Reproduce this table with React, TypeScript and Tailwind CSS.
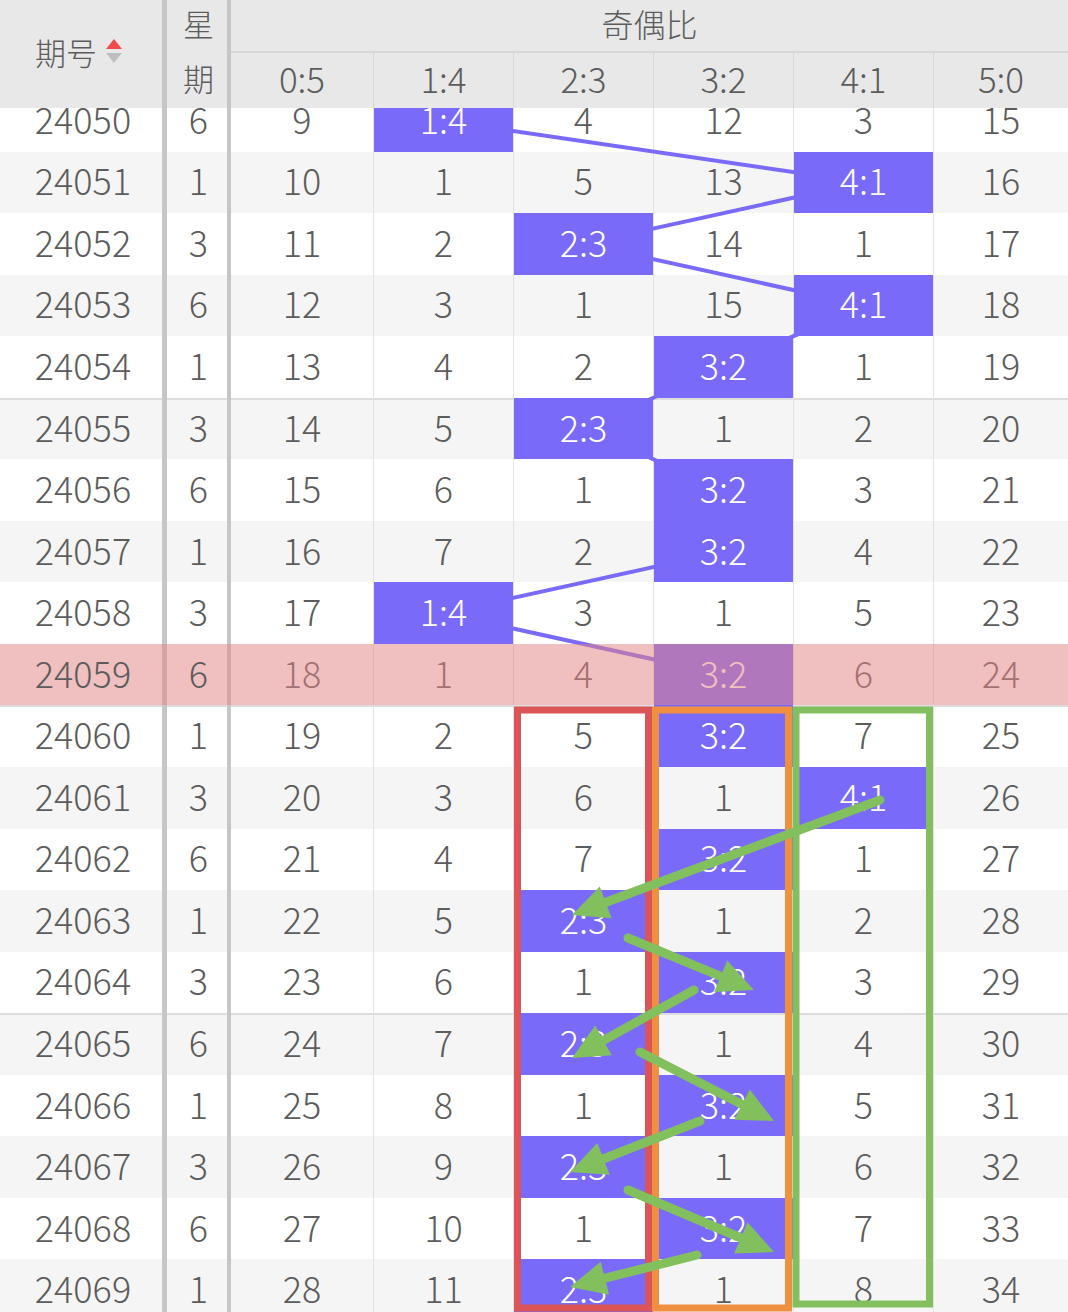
import React from "react";

const RATIOS = ["0:5", "1:4", "2:3", "3:2", "4:1", "5:0"];

// hit = column index of the drawn ratio for that issue
const ROWS = [
  { id: "24050", wk: 6, v: [9, 0, 4, 12, 3, 15], hit: 1 },
  { id: "24051", wk: 1, v: [10, 1, 5, 13, 0, 16], hit: 4 },
  { id: "24052", wk: 3, v: [11, 2, 0, 14, 1, 17], hit: 2 },
  { id: "24053", wk: 6, v: [12, 3, 1, 15, 0, 18], hit: 4 },
  { id: "24054", wk: 1, v: [13, 4, 2, 0, 1, 19], hit: 3 },
  { id: "24055", wk: 3, v: [14, 5, 0, 1, 2, 20], hit: 2 },
  { id: "24056", wk: 6, v: [15, 6, 1, 0, 3, 21], hit: 3 },
  { id: "24057", wk: 1, v: [16, 7, 2, 0, 4, 22], hit: 3 },
  { id: "24058", wk: 3, v: [17, 0, 3, 1, 5, 23], hit: 1 },
  { id: "24059", wk: 6, v: [18, 1, 4, 0, 6, 24], hit: 3 },
  { id: "24060", wk: 1, v: [19, 2, 5, 0, 7, 25], hit: 3 },
  { id: "24061", wk: 3, v: [20, 3, 6, 1, 0, 26], hit: 4 },
  { id: "24062", wk: 6, v: [21, 4, 7, 0, 1, 27], hit: 3 },
  { id: "24063", wk: 1, v: [22, 5, 0, 1, 2, 28], hit: 2 },
  { id: "24064", wk: 3, v: [23, 6, 1, 0, 3, 29], hit: 3 },
  { id: "24065", wk: 6, v: [24, 7, 0, 1, 4, 30], hit: 2 },
  { id: "24066", wk: 1, v: [25, 8, 1, 0, 5, 31], hit: 3 },
  { id: "24067", wk: 3, v: [26, 9, 0, 1, 6, 32], hit: 2 },
  { id: "24068", wk: 6, v: [27, 10, 1, 0, 7, 33], hit: 3 },
  { id: "24069", wk: 1, v: [28, 11, 0, 1, 8, 34], hit: 2 },
];

const COLS = [
  "w-[143px] border-r",
  "w-[140px] border-r",
  "w-[140px] border-r",
  "w-[140px] border-r",
  "w-[140px] border-r",
  "flex-1",
];
const CENTERS = [302, 443.5, 583.5, 723.5, 863.5, 1001];
const ROW_H = 61.55;
const HIGHLIGHT = 9;
const LINKED = 10;

const ARROWS: [number, number, number, number][] = [
  [880, 800, 572, 915],
  [628, 938, 754, 990],
  [694, 990, 572, 1058],
  [640, 1052, 774, 1121],
  [700, 1121, 570, 1172],
  [628, 1190, 774, 1252],
  [697, 1255, 570, 1287],
];

function Arrow({ a }: { a: [number, number, number, number] }) {
  const [sx, sy, tx, ty] = a;
  const len = Math.hypot(tx - sx, ty - sy);
  const ux = (tx - sx) / len;
  const uy = (ty - sy) / len;
  const bx = tx - ux * 36;
  const by = ty - uy * 36;
  const w = 17;
  return (
    <g>
      <line x1={sx} y1={sy} x2={bx + ux * 4} y2={by + uy * 4} stroke="#82c05e" strokeWidth={9} strokeLinecap="round" />
      <polygon points={`${tx},${ty} ${bx - uy * w},${by + ux * w} ${bx + uy * w},${by - ux * w}`} fill="#82c05e" />
    </g>
  );
}

function SortIcon() {
  return (
    <svg width="18" height="30" viewBox="0 0 18 30">
      <polygon points="9,2 17,12 1,12" fill="#f04b4b" />
      <polygon points="1,16 17,16 9,26" fill="#bfbfbf" />
    </svg>
  );
}

export default function App() {
  const trend = ROWS.slice(0, LINKED)
    .map((r, i) => `${CENTERS[r.hit]},${ROW_H * i + ROW_H / 2}`)
    .join(" ");

  return (
    <div className="relative h-[1312px] w-[1068px] overflow-hidden bg-white font-['Noto_Sans_CJK_SC',sans-serif] font-light text-[#5c5c5c]">
      {/* header */}
      <div className="flex h-[108px] bg-[#e8e8e8]">
        <div className="flex w-[167px] items-center justify-center gap-2 border-r-[5px] border-[#c6c6c6] pb-[4px] pr-1 text-[31px]">
          <span>期号</span>
          <SortIcon />
        </div>
        <div className="flex w-[64px] flex-col items-center justify-center border-r-4 border-[#c6c6c6] pb-[8px] pl-[3px] text-[31px] leading-[55px]">
          <span>星</span>
          <span>期</span>
        </div>
        <div className="flex flex-1 flex-col">
          <div className="flex h-[53px] items-center justify-center border-b-2 border-[#d8d8d8] pb-[6px] text-[32px]">奇偶比</div>
          <div className="flex flex-1">
            {RATIOS.map((r, c) => (
              <div key={r} className={`${COLS[c]} flex items-center justify-center border-[#d8d8d8] pb-[6px] text-[35px] leading-none`}>
                {r}
              </div>
            ))}
          </div>
        </div>
      </div>

      {/* body, scrolled a little under the header */}
      <div className="h-[1204px] overflow-hidden">
        <div className="relative -mt-[18px]">
          <svg className="pointer-events-none absolute left-0 top-0 z-10" width="1068" height="1240">
            <polyline points={trend} fill="none" stroke="#7a6afa" strokeWidth={4} />
          </svg>
          {ROWS.map((row, i) => {
            const hl = i === HIGHLIGHT;
            const bg = hl ? "bg-white" : i % 2 === 1 ? "bg-[#f5f5f5]" : "bg-white";
            const sep = i % 5 === 0 && i > 0 ? "shadow-[inset_0_2px_0_#dddddd]" : "";
            return (
              <div key={row.id} className={`relative flex h-[61.55px] text-[36px] leading-none ${bg} ${sep}`}>
                <div className="flex w-[167px] items-center justify-center border-r-[5px] border-[#c6c6c6] pb-[6px] pl-1">
                  <span className="relative z-40">{row.id}</span>
                </div>
                <div className="flex w-[64px] items-center justify-center border-r-4 border-[#c6c6c6] pb-[6px] pl-[3px]">
                  <span className="relative z-40">{row.wk}</span>
                </div>
                {row.v.map((val, c) =>
                  row.hit === c ? (
                    <div key={c} className={`${COLS[c]} flex border-[#e3e3e3]`}>
                      <div className="relative z-20 flex h-full w-full items-center justify-center bg-[#7a6afa] pb-[6px] text-white">
                        {RATIOS[c]}
                      </div>
                    </div>
                  ) : (
                    <div key={c} className={`${COLS[c]} flex items-center justify-center border-[#e3e3e3] pb-[6px]`}>
                      <span className="relative z-20">{val}</span>
                    </div>
                  )
                )}
                {hl && <div className="absolute inset-0 z-30 bg-[rgba(226,133,133,0.52)]" />}
              </div>
            );
          })}
        </div>
      </div>

      {/* hand-drawn annotations */}
      <svg className="pointer-events-none absolute left-0 top-0 z-50" width="1068" height="1312">
        <rect x="517.5" y="710" width="131" height="598" fill="none" stroke="#da5458" strokeWidth={7} />
        <rect x="655.5" y="710" width="133" height="598" fill="none" stroke="#ee9040" strokeWidth={7} />
        <rect x="796" y="710" width="133.5" height="594" fill="none" stroke="#84bf5f" strokeWidth={7} />
        {ARROWS.map((a, k) => (
          <Arrow key={k} a={a} />
        ))}
      </svg>
    </div>
  );
}
